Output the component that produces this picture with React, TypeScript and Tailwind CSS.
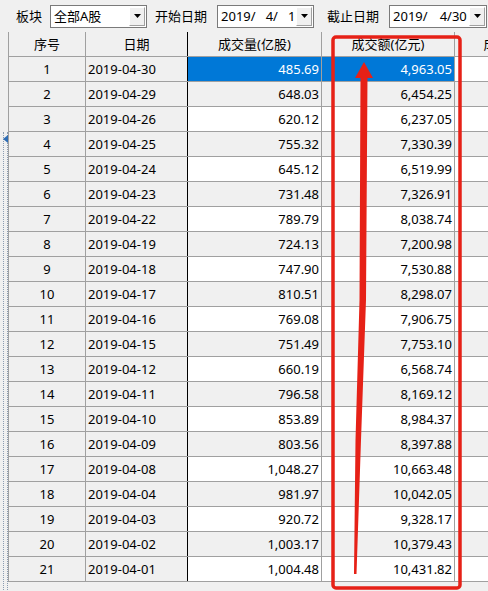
import React from "react";

const rows: [number, string, string, string][] = [
  [1, "2019-04-30", "485.69", "4,963.05"],
  [2, "2019-04-29", "648.03", "6,454.25"],
  [3, "2019-04-26", "620.12", "6,237.05"],
  [4, "2019-04-25", "755.32", "7,330.39"],
  [5, "2019-04-24", "645.12", "6,519.99"],
  [6, "2019-04-23", "731.48", "7,326.91"],
  [7, "2019-04-22", "789.79", "8,038.74"],
  [8, "2019-04-19", "724.13", "7,200.98"],
  [9, "2019-04-18", "747.90", "7,530.88"],
  [10, "2019-04-17", "810.51", "8,298.07"],
  [11, "2019-04-16", "769.08", "7,906.75"],
  [12, "2019-04-15", "751.49", "7,753.10"],
  [13, "2019-04-12", "660.19", "6,568.74"],
  [14, "2019-04-11", "796.58", "8,169.12"],
  [15, "2019-04-10", "853.89", "8,984.37"],
  [16, "2019-04-09", "803.56", "8,397.88"],
  [17, "2019-04-08", "1,048.27", "10,663.48"],
  [18, "2019-04-04", "981.97", "10,042.05"],
  [19, "2019-04-03", "920.72", "9,328.17"],
  [20, "2019-04-02", "1,003.17", "10,379.43"],
  [21, "2019-04-01", "1,004.48", "10,431.82"],
];

function DropBtn() {
  return (
    <div className="h-full w-[16px] flex items-center justify-center bg-[#f0f0f0] border-l border-t border-l-white border-t-white border-r border-b border-r-[#a0a0a0] border-b-[#a0a0a0]">
      <svg width="7" height="4" viewBox="0 0 7 4">
        <polygon points="0,0 7,0 3.5,4" fill="#000" />
      </svg>
    </div>
  );
}

function Box({ width, children }: { width: string; children: React.ReactNode }) {
  return (
    <div className={`${width} h-[23px] flex items-stretch bg-white border border-[#7a7a7a] p-[1px]`}>
      <div className="flex-1 flex items-center pl-[2px] whitespace-pre overflow-hidden">{children}</div>
      <DropBtn />
    </div>
  );
}

export default function App() {
  return (
    <div className="relative w-[488px] h-[591px] overflow-hidden bg-[#f0f0f0] text-[13px] leading-none text-black font-[family-name:'Noto_Sans','Noto_Sans_CJK_SC',sans-serif]">
      {/* toolbar */}
      <div className="h-[32px] flex items-center whitespace-nowrap">
        <span className="ml-[16px]">板块</span>
        <div className="ml-[8px]">
          <Box width="w-[97px]">全部A股</Box>
        </div>
        <span className="ml-[8px]">开始日期</span>
        <div className="ml-[10px]">
          <Box width="w-[97px]">
            <span>2019/</span>
            <span className="ml-[10px]">4/</span>
            <span className="ml-[10px]">1</span>
          </Box>
        </div>
        <span className="ml-[13px]">截止日期</span>
        <div className="ml-[10px] shrink-0">
          <Box width="w-[98px]">
            <span>2019/</span>
            <span className="ml-[12px]">4/30</span>
          </Box>
        </div>
      </div>

      {/* grid */}
      <div className="flex">
        <div className="w-[8px] shrink-0 relative">
          <div className="absolute left-[3px] top-[100px] w-[5px] h-[460px] border-l border-r border-dotted border-[#8a9bb0]" />
          <svg className="absolute left-[3px] top-[103px]" width="5" height="8" viewBox="0 0 5 8">
            <polygon points="5,0 0,4 5,8" fill="#2f6db5" />
          </svg>
        </div>
        <div className="flex-1 overflow-hidden border-l border-[#a0a0a0]">
          <div className="flex h-[25px] border-b border-[#a0a0a0] bg-[#f0f0f0] whitespace-nowrap">
            <div className="w-[77px] shrink-0 border-r border-[#a0a0a0] flex items-center justify-center">序号</div>
            <div className="w-[102px] shrink-0 border-r border-black flex items-center justify-center">日期</div>
            <div className="w-[134px] shrink-0 border-r border-[#a0a0a0] flex items-center justify-center">成交量(亿股)</div>
            <div className="w-[133px] shrink-0 border-r border-[#a0a0a0] flex items-center justify-center">成交额(亿元)</div>
            <div className="w-[130px] shrink-0 flex items-center justify-center">成交额(亿元)</div>
          </div>
          {rows.map(([n, d, v, a], i) => {
            const sel = i === 0;
            const stripe = i % 2 === 1 ? "bg-[#f0f0f0]" : "bg-white";
            const dataCls = sel ? "bg-[#0078d7] text-white" : stripe;
            return (
              <div key={n} className="flex h-[25px] border-b border-[#a0a0a0] whitespace-nowrap">
                <div className="w-[77px] shrink-0 border-r border-[#a0a0a0] bg-[#f0f0f0] flex items-center justify-center">{n}</div>
                <div className="w-[102px] shrink-0 border-r border-black bg-[#f0f0f0] flex items-center pl-[2px]">{d}</div>
                <div className={`w-[134px] shrink-0 border-r border-[#a0a0a0] flex items-center justify-end pr-[2px] ${dataCls}`}>{v}</div>
                <div className={`w-[133px] shrink-0 border-r border-[#a0a0a0] flex items-center justify-end pr-[2px] ${dataCls}`}>{a}</div>
                <div className={`w-[130px] shrink-0 ${stripe}`} />
              </div>
            );
          })}
        </div>
      </div>

      {/* red annotation */}
      <svg className="absolute left-0 top-0 pointer-events-none" width="488" height="591" viewBox="0 0 488 591">
        <rect x="333" y="37" width="127" height="551" rx="3" fill="none" stroke="#e62117" strokeWidth="3.5" />
        <polygon points="364,62 355,78 373,78" fill="#e62117" />
        <polygon
          points="360.5,76 367.5,76 366,300 361,440 356.5,574 354,574 355.5,440 359.5,300"
          fill="#e62117"
        />
      </svg>
    </div>
  );
}
